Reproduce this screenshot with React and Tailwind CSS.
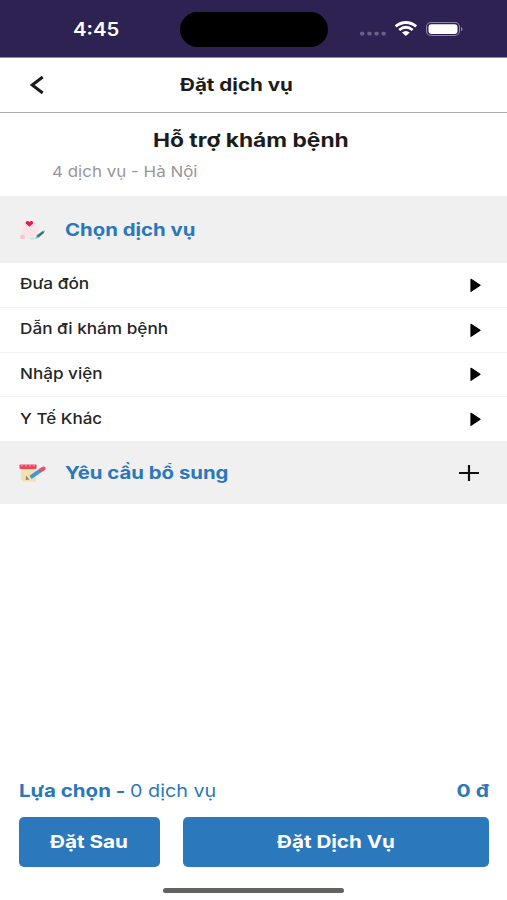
function Label({ children, className = '' }) {
  return <span className={`inline-block whitespace-nowrap ${className}`}>{children}</span>
}

function StatusBar() {
  return (
    <div className="flex h-[57px] shrink-0 items-center bg-[#2e2253]">
      <div className="w-[180px] pt-[2px] pl-[72.5px] text-[18px] leading-[24px] font-semibold text-white">
        <Label className="origin-left scale-x-[1.13]">4:45</Label>
      </div>
      <div className="mt-[2px] h-[35px] w-[148px] rounded-full bg-black" />
      <svg className="ml-[32px] h-[24px] w-[108px]" viewBox="0 0 108 24">
        <g fill="#6b6189">
          <rect x="0" y="14.8" width="4.4" height="3.6" rx="1.6" />
          <rect x="7.3" y="14.8" width="4.4" height="3.6" rx="1.6" />
          <rect x="14.4" y="14.8" width="4.4" height="3.6" rx="1.6" />
          <rect x="21.4" y="14.8" width="4.4" height="3.6" rx="1.6" />
        </g>
        <g fill="none" stroke="#fff" strokeWidth="2.8">
          <path d="M35.6 9.4C41.8 4.2 50 4.2 56.2 9.4" />
          <path d="M39.2 13C43.4 9.6 48.4 9.6 52.6 13" />
        </g>
        <path d="M42 15.5C44.5 13.5 47.3 13.5 49.8 15.5L45.9 19Z" fill="#fff" />
        <rect x="66.5" y="5.5" width="33" height="13" rx="4.5" fill="none" stroke="#8b83a4" strokeWidth="1.1" />
        <rect x="68.5" y="7.2" width="29" height="9.7" rx="3" fill="#fff" />
        <path d="M101 10C103 10.5 103 13.5 101 14Z" fill="#8b83a4" />
      </svg>
    </div>
  )
}

function HeartIcon() {
  return (
    <svg className="h-[22px] w-[28px]" viewBox="0 0 28 22">
      <path d="M5 4Q10 0 17 3L20 14L13 19L2 16Z" fill="#fde3e7" />
      <rect x="1" y="16" width="5" height="4" rx="1.5" fill="#fbc3cf" />
      <path d="M9.6 19.7Q14 17.7 17 19.9Q14 21.5 9.6 19.7Z" fill="#b9ebda" />
      <path d="M10.4 7.8L6.8 4.6C6 2 9 1.2 10.4 3.1C11.8 1.2 14.8 2 14 4.6Z" fill="#f0144f" />
      <path d="M16 20L17.5 16.3L25.2 11L26 12.8L20.2 18.5Z" fill="#73c9b5" />
      <path d="M18.5 17.7L24.4 12.8" stroke="#496b82" strokeWidth="2.2" />
    </svg>
  )
}

function NoteIcon() {
  return (
    <svg className="h-[22px] w-[28px]" viewBox="0 0 28 22">
      <path d="M2 5H17V19.8H4.5L2 17.5Z" fill="#f4e2ae" />
      <rect x="0.5" y="2.5" width="17" height="4.5" rx="0.8" fill="#ee4658" />
      <path d="M3 2.5V4.4M7 2.5V4.4M11 2.5V4.4M15 2.5V4.4" stroke="#f9b9bd" strokeWidth="1" />
      <path d="M7 13.5L10.5 17.5L6.7 18Z" fill="#9a8370" />
      <path d="M11.5 15.3L22 8.2" stroke="#3e9bd8" strokeWidth="4" />
      <path d="M22 8L24.6 6.5" stroke="#ef4c67" strokeWidth="4" strokeLinecap="round" />
    </svg>
  )
}

const services = [
  ['Đưa đón', 'scale-x-[1.15]'],
  ['Dẫn đi khám bệnh', 'scale-x-[1.145]'],
  ['Nhập viện', 'scale-x-[1.14]'],
  ['Y Tế Khác', 'scale-x-[1.135]'],
]

export default function App() {
  return (
    <div className="flex h-[900px] w-[507px] flex-col overflow-hidden bg-white font-[Inter,sans-serif] text-[#1c1c1c]">
      <StatusBar />
      <header className="grid h-[56px] shrink-0 grid-cols-[60px_1fr_94px] items-center border-t border-b border-t-[#8f899f] border-b-[#adadad]">
        <svg className="ml-[29px] h-[20px] w-[16px]" viewBox="0 0 16 20">
          <path d="M13.7 2L3.2 10L13.7 18" fill="none" stroke="#1a1a1a" strokeWidth="3" />
        </svg>
        <h1 className="pl-[120px] text-[17px] leading-[24px] font-bold">
          <Label className="origin-left scale-x-[1.213]">Đặt dịch vụ</Label>
        </h1>
      </header>

      <section className="flex h-[83px] shrink-0 flex-col pt-[14px]">
        <h2 className="pl-[153px] text-[19px] leading-[28px] font-bold">
          <Label className="origin-left scale-x-[1.198]">Hỗ trợ khám bệnh</Label>
        </h2>
        <p className="mt-[5px] pl-[52px] text-[15px] leading-[24px] text-[#979797]">
          <Label className="origin-left scale-x-[1.13]">4 dịch vụ - Hà Nội</Label>
        </p>
      </section>

      <section className="flex h-[67px] shrink-0 items-center bg-[#f0f0f0] pl-[19px]">
        <HeartIcon />
        <h3 className="ml-[18px] text-[17.5px] leading-[24px] font-bold text-[#2b77bc]">
          <Label className="origin-left scale-x-[1.163]">Chọn dịch vụ</Label>
        </h3>
      </section>

      <ul className="flex h-[178px] shrink-0 flex-col">
        {services.map(([name, scale], i) => (
          <li
            key={name}
            className={`flex flex-1 items-center justify-between pr-[26px] pl-[20px] ${i < 3 ? 'border-b border-[#f1f1f1]' : ''}`}
          >
            <span className="-mt-[1px] text-[15px] leading-[24px] font-medium text-[#262626]">
              <Label className={`origin-left ${scale}`}>{name}</Label>
            </span>
            <svg className="h-[14px] w-[11px]" viewBox="0 0 11 14">
              <path d="M1 1.3L10 7.3L1 13.3Z" fill="#000" stroke="#000" strokeWidth="1.2" strokeLinejoin="round" />
            </svg>
          </li>
        ))}
      </ul>

      <section className="flex h-[63px] shrink-0 items-center bg-[#f0f0f0] pl-[19px]">
        <NoteIcon />
        <h3 className="mt-[1px] ml-[18px] flex-1 text-[17.5px] leading-[24px] font-bold text-[#2b77bc]">
          <Label className="origin-left scale-x-[1.163]">Yêu cầu bổ sung</Label>
        </h3>
        <svg className="mr-[27px] h-[18px] w-[22px]" viewBox="0 0 22 18">
          <path d="M1 9H21M11 1V17" stroke="#111" strokeWidth="2.2" />
        </svg>
      </section>

      <footer className="mt-auto flex flex-col px-[18.5px] pb-[7.5px]">
        <div className="flex h-[24px] items-center text-[17.5px] leading-[24px] text-[#2b77bc]">
          <span className="w-[111px] font-bold">
            <Label className="origin-left scale-x-[1.17]">Lựa chọn -</Label>
          </span>
          <span>
            <Label className="origin-left scale-x-[1.13]">0 dịch vụ</Label>
          </span>
          <span className="ml-auto font-bold">
            <Label className="origin-right scale-x-[1.2]">0 đ</Label>
          </span>
        </div>
        <div className="mt-[14px] flex h-[49.5px] gap-[23px] text-[17.5px] font-bold text-white">
          <button className="w-[141.5px] rounded-[5px] bg-[#2c78bd]">
            <Label className="scale-x-[1.185]">Đặt Sau</Label>
          </button>
          <button className="flex-1 rounded-[5px] bg-[#2c78bd]">
            <Label className="scale-x-[1.178]">Đặt Dịch Vụ</Label>
          </button>
        </div>
        <div className="mt-[21px] h-[5px] w-[181px] self-center rounded-full bg-[#626462]" />
      </footer>
    </div>
  )
}
